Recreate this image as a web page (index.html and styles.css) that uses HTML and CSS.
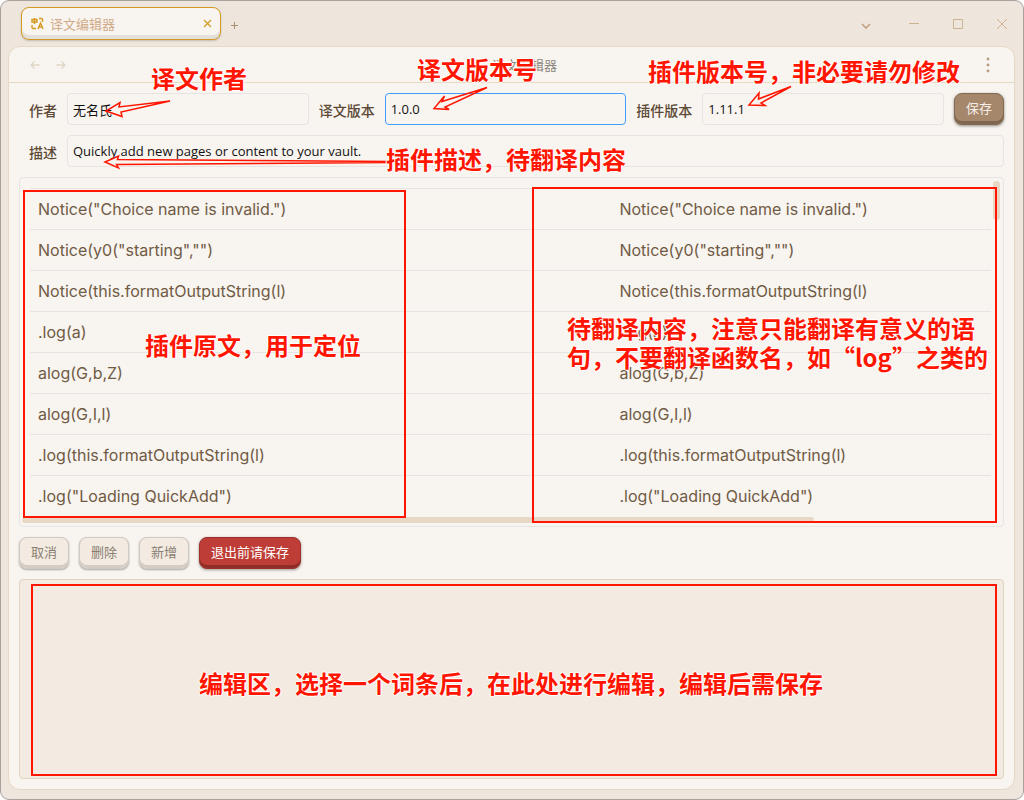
FILE: index.html
```
<!DOCTYPE html>
<html lang="zh-CN">
<head>
<meta charset="utf-8">
<meta name="viewport" content="width=device-width, initial-scale=1">
<title>译文编辑器</title>
<link rel="stylesheet" href="styles.css">
</head>
<body>
<div class="window">
  <header class="titlebar">
    <div class="tab">
      <svg class="tab-icon" width="13" height="13" viewBox="0 0 13 13" fill="none" stroke="currentColor" stroke-width="1.4"><path d="M1 2.500h5v2.500H1zM3.500 1v6M8 1.500h2.500q1 0 1 1V5M1 8v2.500q0 1 1 1H5M7 12l2.500-6 2.500 6M8 10h3"/></svg>
      <span class="tab-title">译文编辑器</span>
      <button class="icon-button tab-close" aria-label="关闭标签页"><svg width="9" height="9" viewBox="0 0 9 9"><path d="M1 1l7 7M8 1l-7 7"/></svg></button>
    </div>
    <button class="icon-button tab-add" aria-label="新标签页"><svg width="9" height="9" viewBox="0 0 9 9"><path d="M4.500 1v7M1 4.500h7"/></svg></button>
    <div class="window-controls">
      <button class="icon-button tab-list" aria-label="标签列表"><svg width="10" height="6" viewBox="0 0 10 6"><path d="M1 1l4 4 4-4"/></svg></button>
      <button class="icon-button" aria-label="最小化"><svg width="10" height="10" viewBox="0 0 10 10"><path d="M0 4.500h10"/></svg></button>
      <button class="icon-button" aria-label="最大化"><svg width="10" height="10" viewBox="0 0 10 10"><path d="M.5.5h9v9h-9z"/></svg></button>
      <button class="icon-button" aria-label="关闭"><svg width="10" height="10" viewBox="0 0 10 10"><path d="M0 0l10 10M10 0L0 10"/></svg></button>
    </div>
  </header>

  <main class="panel">
    <div class="view-header">
      <button class="icon-button nav" aria-label="后退"><svg width="10" height="8" viewBox="0 0 10 8"><path d="M9.500 4H1M4.500.5L1 4l3.500 3.500"/></svg></button>
      <button class="icon-button nav" aria-label="前进"><svg width="10" height="8" viewBox="0 0 10 8"><path d="M.5 4H9M5.500.5L9 4 5.500 7.500"/></svg></button>
      <h1 class="view-title">译文编辑器</h1>
      <button class="icon-button more" aria-label="更多选项"><svg width="4" height="16" viewBox="0 0 4 16"><circle cx="2" cy="2" r="1.4"/><circle cx="2" cy="8" r="1.4"/><circle cx="2" cy="14" r="1.4"/></svg></button>
    </div>

    <div class="view-content">
      <div class="form-row">
        <label for="author">作者</label>
        <input id="author" type="text" value="无名氏">
        <label for="version">译文版本</label>
        <input id="version" class="focused" type="text" value="1.0.0">
        <label for="plugin-version">插件版本</label>
        <input id="plugin-version" type="text" value="1.11.1">
        <button class="button button-save">保存</button>
      </div>
      <div class="form-row">
        <label for="description">描述</label>
        <input id="description" type="text" value="Quickly add new pages or content to your vault.">
      </div>

      <div class="list">
        <div class="list-view">
          <table class="entries">
            <tr><td>Notice("Choice name is invalid.")</td><td>Notice("Choice name is invalid.")</td></tr>
            <tr><td>Notice(y0("starting","")</td><td>Notice(y0("starting","")</td></tr>
            <tr><td>Notice(this.formatOutputString(l)</td><td>Notice(this.formatOutputString(l)</td></tr>
            <tr><td>.log(a)</td><td>.log(a)</td></tr>
            <tr><td>alog(G,b,Z)</td><td>alog(G,b,Z)</td></tr>
            <tr><td>alog(G,I,l)</td><td>alog(G,I,l)</td></tr>
            <tr><td>.log(this.formatOutputString(l)</td><td>.log(this.formatOutputString(l)</td></tr>
            <tr><td>.log("Loading QuickAdd")</td><td>.log("Loading QuickAdd")</td></tr>
          </table>
        </div>
        <div class="thumb thumb-vertical"></div>
        <div class="thumb thumb-horizontal"></div>
      </div>

      <div class="actions">
        <button class="button">取消</button>
        <button class="button">删除</button>
        <button class="button">新增</button>
        <button class="button button-danger">退出前请保存</button>
      </div>

      <textarea class="editor" aria-label="编辑区"></textarea>
    </div>
  </main>
</div>

<div class="notes">
  <div class="frame frame-source"></div>
  <div class="frame frame-target"></div>
  <div class="frame frame-editor"></div>
  <svg class="arrows" width="1024" height="200" viewBox="0 0 1024 200">
    <path d="M170 101L119 107l1-4.500L106 111l16 5.500-1-4.500z"/>
    <path d="M487 87.500L442 101.500l2.500-5.500L434 108.500l15 1-4-2.500z"/>
    <path d="M791 86.500L758.500 99l.5-6-10 12 16 .5-4-2.500z"/>
    <path d="M389 161.500L117.500 159.500l1-3.500L105 162l13.500 6-2-3.500L389 162.500z"/>
  </svg>
  <p class="note note-author">译文作者</p>
  <p class="note note-version">译文版本号</p>
  <p class="note note-plugin">插件版本号，非必要请勿修改</p>
  <p class="note note-description">插件描述，待翻译内容</p>
  <p class="note note-source">插件原文，用于定位</p>
  <p class="note note-target">待翻译内容，注意只能翻译有意义的语<br>句，不要翻译函数名，如“log”之类的</p>
  <p class="note note-editor">编辑区，选择一个词条后，在此处进行编辑，编辑后需保存</p>
</div>
</body>
</html>
```
FILE: styles.css
```
* { box-sizing: border-box; }

body {
  position: relative;
  margin: 0;
  background: #fff;
  color: #5c4a36;
  font-family: "Open Sans", "Noto Sans CJK SC", sans-serif;
  font-size: 14px;
}

button, input, textarea { font: inherit; }

.window {
  display: flex;
  flex-direction: column;
  min-height: 100vh;
  padding: 0 8px 9px 7px;
  border: 1px solid #a6a29e;
  border-radius: 9px;
  background: #eee6dd;
}

.titlebar {
  display: flex;
  align-items: center;
  height: 45px;
  padding-left: 13px;
}

.tab {
  display: flex;
  align-items: center;
  width: 200px;
  height: 33px;
  padding: 0 8px 0 9px;
  border: 1px solid #d49a1f;
  border-radius: 8px;
  background: #f8f4ef;
  box-shadow: inset 0 -4px 0 #e3dfda, 0 1px 2px #00000030;
}

.tab-icon { color: #d49a1f; }

.tab-title {
  flex: 1;
  margin-left: 6px;
  color: #d2ab88;
  font-family: "Noto Sans CJK SC", sans-serif;
  font-size: 13px;
}

.icon-button {
  display: flex;
  align-items: center;
  justify-content: center;
  padding: 0;
  border: 0;
  background: none;
  color: #cdb28f;
}

.icon-button svg {
  fill: none;
  stroke: currentColor;
}

.tab-close { color: #d49a1f; }
.tab-close svg { stroke-width: 1.3; }

.tab-add {
  width: 26px;
  height: 26px;
  padding-top: 4px;
  color: #a89070;
}

.window-controls {
  display: flex;
  margin-right: -9px;
  margin-left: auto;
}

.window-controls .icon-button {
  width: 44px;
  height: 44px;
}

.window-controls .tab-list {
  width: 26px;
  margin-right: 13px;
  padding-top: 4px;
  color: #c09a75;
}

.tab-list svg { stroke-width: 1.4; }

.panel {
  display: flex;
  flex: 1;
  flex-direction: column;
  border: 1px solid #e6d8c4;
  border-radius: 12px;
  background: #f8f4ef;
}

.view-header {
  display: flex;
  align-items: center;
  height: 36px;
  padding: 0 13px;
  border-bottom: 1px solid #e6d8c4;
}

.nav {
  width: 26px;
  color: #e0d5c5;
}

.nav svg { stroke-width: 1.3; }

.view-title {
  flex: 1;
  margin: 0;
  color: #8c8880;
  font-family: "Noto Sans CJK SC", sans-serif;
  font-size: 13px;
  font-weight: 400;
  line-height: 18px;
  text-align: center;
}

.more { width: 26px; }
.more svg {
  fill: #b89c80;
  stroke: none;
}

.view-content {
  display: flex;
  flex: 1;
  flex-direction: column;
  gap: 10px;
  padding: 10px;
}

.form-row {
  display: flex;
  align-items: center;
  gap: 10px;
  padding-left: 10px;
}

.form-row label {
  padding-top: 2px;
  font-family: "Noto Sans CJK SC", sans-serif;
  font-weight: 500;
}

.form-row input {
  flex: 1;
  min-width: 0;
  height: 32px;
  padding: 0 5px;
  border: 1px solid #e6e5e4;
  border-radius: 4px;
  outline: 0;
  background: transparent;
  color: #111;
  font-family: "Open Sans", "Noto Sans CJK SC", sans-serif;
  font-size: 13px;
}

.form-row .focused { border-color: #409eff; }

.button {
  height: 32px;
  padding: 0 11px 3px;
  border: 1px solid #d0cac2;
  border-radius: 8px;
  background: #f3ebe2;
  box-shadow: inset 0 -3px 0 #d3cdc5, 0 1px 2px #00000050;
  color: #8a7e70;
  font-family: "Noto Sans CJK SC", sans-serif;
  font-size: 13px;
}

.button-save {
  border-color: #83694f;
  background: #a5876c;
  box-shadow: inset 0 -3px 0 #7e664f, 0 1px 3px #00000070;
  color: #f6eee6;
}

.button-danger {
  border-color: #9c302b;
  background: #be3d36;
  box-shadow: inset 0 -3px 0 #8f2e29, 0 1px 3px #00000060;
  color: #fff;
}

.list {
  position: relative;
  padding: 10px 12px 10px 10px;
  border: 1px solid #e6e5e4;
  border-radius: 4px;
}

.list-view { overflow: hidden; }

.entries {
  width: 121%;
  border-collapse: separate;
  border-spacing: 0;
  table-layout: fixed;
}

.entries td {
  height: 41px;
  padding: 0 8px;
  border-top: 1px solid #e6e5e4;
  color: #705b45;
  font-family: Inter, "Noto Sans CJK SC", sans-serif;
  font-size: 16px;
}

.thumb {
  position: absolute;
  border-radius: 4px;
  background: #e6d8c4;
}

.thumb-vertical {
  top: 3px;
  right: 3px;
  width: 7px;
  height: 39px;
}

.thumb-horizontal {
  bottom: 3px;
  left: 2px;
  width: 792px;
  max-width: 81%;
  height: 6px;
}

.actions {
  display: flex;
  gap: 10px;
}

.editor {
  flex: 1;
  width: 100%;
  border: 1px solid #e0d3c0;
  border-radius: 4px;
  outline: 0;
  background: #f3ebe2;
  resize: none;
}

/* Red callouts drawn over the window */
.notes {
  position: absolute;
  top: 0;
  left: 0;
  pointer-events: none;
}

.frame {
  position: absolute;
  border: 2px solid #ff1500;
}

.frame-source { top: 190px; left: 23px; width: 383px; height: 328px; }
.frame-target { top: 187px; left: 532px; width: 465px; height: 336px; }
.frame-editor { top: 584px; left: 31px; width: 966px; height: 192px; }

.arrows {
  position: absolute;
  top: 0;
  left: 0;
  fill: none;
  stroke: #ff1500;
  stroke-width: 1.5;
}

.note {
  position: absolute;
  margin: 0;
  color: #ff1500;
  font-family: "Noto Sans CJK SC", sans-serif;
  font-size: 24px;
  font-weight: 700;
  line-height: 29px;
  white-space: nowrap;
  text-shadow: 1px 0 #fff, -1px 0 #fff, 0 1px #fff, 0 -1px #fff;
}

.note-author { top: 63px; left: 151px; }
.note-version { top: 54px; left: 417px; }
.note-plugin { top: 56px; left: 648px; }
.note-description { top: 144px; left: 386px; }
.note-source { top: 330px; left: 145px; }
.note-target { top: 313px; left: 567px; }
.note-editor { top: 668px; left: 199px; }
```
